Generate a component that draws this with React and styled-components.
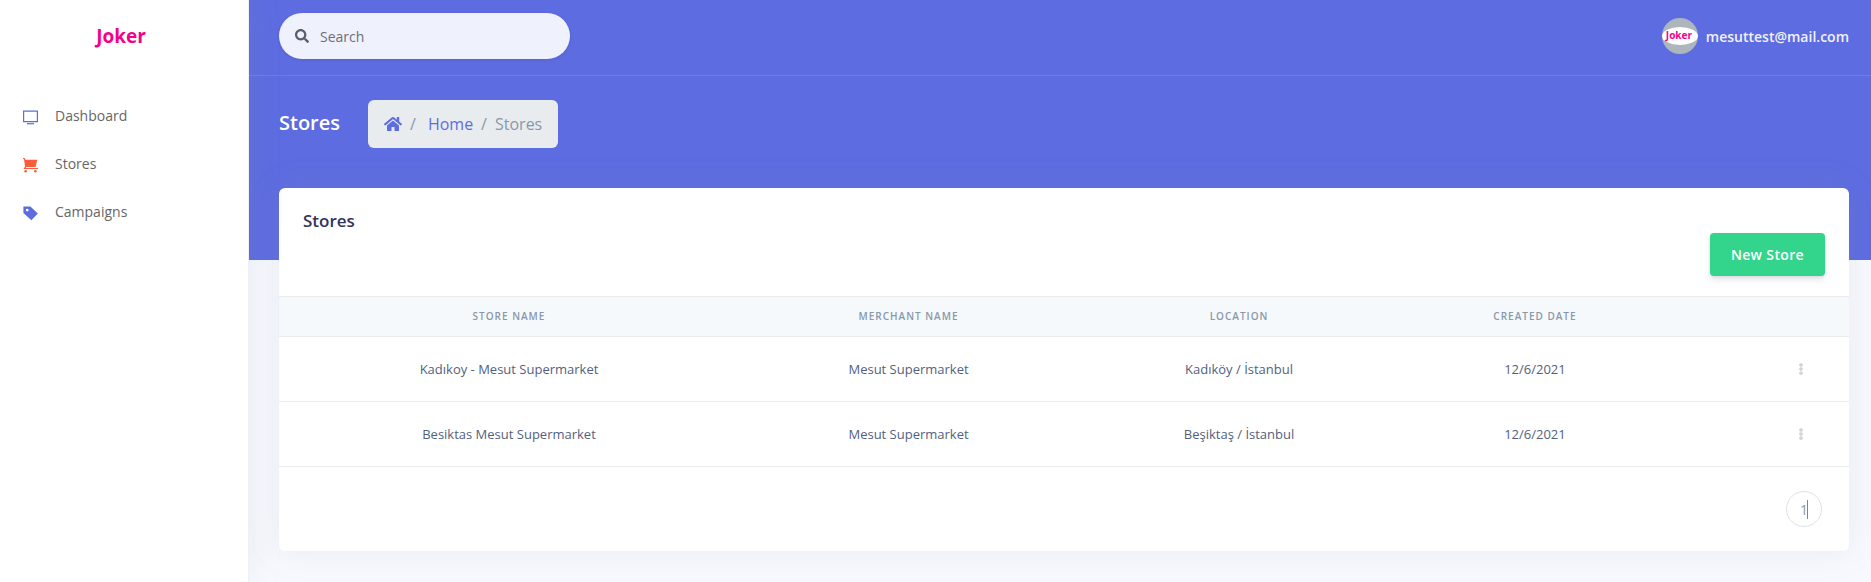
import React from "react";
import styled, { createGlobalStyle } from "styled-components";
import { FaSearch, FaHome, FaEllipsisV } from "react-icons/fa";

const GlobalStyle = createGlobalStyle`
  *, *::before, *::after { box-sizing: border-box; }
  body {
    margin: 0;
    background: #f8f9fe;
    color: #525f7f;
    font-family: "Open Sans", "Noto Sans", sans-serif;
    font-size: 16px;
    line-height: 24px;
  }
  h1, h2, ul, ol { margin: 0; padding: 0; }
  ul, ol { list-style: none; }
  a { text-decoration: none; }
  button, input { font-family: inherit; }
`;

const Layout = styled.div`
  display: flex;
  min-height: 100vh;
`;

const Sidebar = styled.aside`
  flex: 0 0 249px;
  position: relative;
  z-index: 1;
  background: #fff;
  border-right: 1px solid #f0f0f4;
  box-shadow: 0 0 32px 0 rgba(136, 152, 170, 0.15);
`;

const Brand = styled.a`
  display: flex;
  align-items: center;
  justify-content: center;
  height: 72px;
  padding-right: 6px;
  color: #f5008b;
  font-size: 19px;
  font-weight: 700;
`;

const NavList = styled.ul`
  display: flex;
  flex-direction: column;
  gap: 4px;
  padding: 22px 8px !important;
`;

const NavLink = styled.a`
  display: flex;
  align-items: center;
  height: 44px;
  padding: 0 15px;
  gap: 17px;
  color: #666;
  font-size: 14px;
`;

const NavIcon = styled.svg`
  width: 15px;
  height: 15px;
  margin-top: 2px;
  fill: ${(p) => p.$color};
`;

const Main = styled.div`
  flex: 1;
  min-width: 0;
`;

const Hero = styled.div`
  background: #5d6ce0;
  padding-bottom: 112px;
`;

const TopBar = styled.header`
  display: flex;
  align-items: center;
  justify-content: space-between;
  height: 76px;
  padding: 0 22px 4px 30px;
  border-bottom: 1px solid rgba(255, 255, 255, 0.1);
`;

const SearchBox = styled.label`
  display: flex;
  align-items: center;
  gap: 11px;
  width: 291px;
  height: 46px;
  padding: 0 16px;
  border-radius: 32px;
  background: #eff1fd;
  color: #5b5e66;
  box-shadow: 0 1px 3px rgba(50, 50, 93, 0.15);
  svg { width: 14px; height: 14px; }
`;

const SearchInput = styled.input`
  flex: 1;
  min-width: 0;
  padding: 2px 0 0;
  border: 0;
  outline: 0;
  background: none;
  color: #5b5e66;
  font-size: 14px;
  &::placeholder { color: #6c6f78; opacity: 1; }
`;

const Account = styled.a`
  display: flex;
  align-items: center;
  gap: 8px;
  color: #f1f2fd;
  font-size: 14px;
  font-weight: 600;
`;

const AccountName = styled.span`
  padding-top: 2px;
`;

const Avatar = styled.span`
  display: flex;
  align-items: center;
  width: 36px;
  height: 36px;
  border-radius: 50%;
  background: #adb5bd;
  overflow: hidden;
`;

const AvatarMark = styled.span`
  width: 36px;
  height: 18px;
  padding-left: 4px;
  border-radius: 50%;
  background: #fff;
  color: #f5008b;
  font-size: 10px;
  font-weight: 700;
  line-height: 16px;
`;

const TitleRow = styled.div`
  display: flex;
  align-items: center;
  gap: 28px;
  padding: 24px 30px 0;
`;

const PageTitle = styled.h1`
  padding-bottom: 2px !important;
  color: #fff;
  font-size: 20px;
  font-weight: 600;
`;

const Crumbs = styled.ol`
  display: flex;
  align-items: center;
  gap: 8px;
  height: 48px;
  padding: 0 16px !important;
  border-radius: 6px;
  background: #e9ecef;
  color: #8898aa;
`;

const Crumb = styled.li`
  display: flex;
  align-items: center;
  gap: ${(p) => p.$gap || 8}px;
  &:not(:first-child)::before { content: "/"; }
  a { display: flex; color: #5d6ce0; }
  svg { width: 18px; height: 16px; }
`;

const Card = styled.section`
  margin: -72px 22px 30px 30px;
  border-radius: 6px;
  background: #fff;
  box-shadow: 0 0 32px 0 rgba(136, 152, 170, 0.15);
  position: relative;
`;

const CardHeader = styled.div`
  display: flex;
  flex-direction: column;
  padding: 20px 24px;
`;

const CardTitle = styled.h2`
  color: #32325d;
  font-size: 17px;
  font-weight: 600;
  line-height: 25px;
`;

const NewButton = styled.button`
  align-self: flex-end;
  height: 43px;
  padding: 0 21px;
  border: 0;
  border-radius: 4px;
  background: #33d48c;
  color: #fff;
  font-size: 14px;
  font-weight: 600;
  letter-spacing: 0.025em;
  box-shadow: 0 4px 6px rgba(50, 50, 93, 0.11), 0 1px 3px rgba(0, 0, 0, 0.08);
`;

const Table = styled.table`
  width: 100%;
  border-spacing: 0;
  table-layout: fixed;
`;

const Col = styled.col`
  width: ${(p) => p.$share}%;
`;

const Th = styled.th`
  height: 40px;
  padding: 0 24px 2px;
  border-top: 1px solid #e9ecef;
  background: #f6f9fc;
  color: #8898aa;
  font-size: 10px;
  font-weight: 600;
  letter-spacing: 1px;
  text-transform: uppercase;
`;

const Td = styled.td`
  height: 65px;
  padding: 0 24px;
  border-top: 1px solid #e9ecef;
  font-size: 13px;
  text-align: ${(p) => p.$align || "center"};
`;

const RowMenu = styled.button`
  display: inline-flex;
  align-items: center;
  justify-content: center;
  width: 32px;
  height: 32px;
  margin-right: 8px;
  padding: 0;
  border: 0;
  background: none;
  color: #ced4da;
  vertical-align: middle;
  svg { width: 12px; height: 12px; stroke: currentColor; stroke-width: 16px; }
`;

const CardFooter = styled.nav`
  display: flex;
  justify-content: flex-end;
  padding: 24px 27px;
  border-top: 1px solid #e9ecef;
`;

const PageButton = styled.button`
  display: flex;
  align-items: center;
  justify-content: center;
  width: 36px;
  height: 36px;
  padding: 0;
  border: 1px solid #dee2e6;
  border-radius: 50%;
  background: #fff;
  color: #8898aa;
  font-size: 14px;
`;

const Caret = styled.span`
  width: 1px;
  height: 19px;
  margin-left: -1px;
  background: #7a839c;
`;

const stores = [
  ["Kadıkoy - Mesut Supermarket", "Mesut Supermarket", "Kadıköy / İstanbul", "12/6/2021"],
  ["Besiktas Mesut Supermarket", "Mesut Supermarket", "Beşiktaş / İstanbul", "12/6/2021"],
];

export default function App() {
  return (
    <>
      <GlobalStyle />
      <Layout>
        <Sidebar>
          <Brand href="#">Joker</Brand>
          <nav aria-label="Main">
            <NavList>
              <li>
                <NavLink href="#">
                  <NavIcon $color="#5d6ce0" viewBox="0 0 15 15" aria-hidden="true">
                    <path fillRule="evenodd" d="M0 .6h15v11.6H0zM1.2 1.8V11h12.6V1.8z" />
                    <path d="M4 13.1h7v1.2H4z" />
                  </NavIcon>
                  Dashboard
                </NavLink>
              </li>
              <li>
                <NavLink href="#">
                  <NavIcon $color="#fb5c3c" viewBox="0 0 15 15" aria-hidden="true">
                    <path d="M0 0h1.6l.9 1.8H14.3L12.6 9H3.2L2.6 9.9H15v1H.4l1.5-2.2L2 8 1 1.3 0 1z" />
                    <circle cx="2.6" cy="13.2" r="1.3" />
                    <circle cx="12.4" cy="13.2" r="1.3" />
                  </NavIcon>
                  Stores
                </NavLink>
              </li>
              <li>
                <NavLink href="#">
                  <NavIcon $color="#5d6ce0" viewBox="0 0 15 15" aria-hidden="true">
                    <path fillRule="evenodd" d="M.4.4h7l7.4 7.2-6.4 6.6L.4 7zM4.2 2.7a1.4 1.4 0 1 0 0 2.8 1.4 1.4 0 0 0 0-2.8z" />
                  </NavIcon>
                  Campaigns
                </NavLink>
              </li>
            </NavList>
          </nav>
        </Sidebar>
        <Main>
          <Hero>
            <TopBar>
              <SearchBox>
                <FaSearch aria-hidden="true" />
                <SearchInput type="text" placeholder="Search" aria-label="Search" />
              </SearchBox>
              <Account href="#">
                <Avatar aria-hidden="true">
                  <AvatarMark>Joker</AvatarMark>
                </Avatar>
                <AccountName>mesuttest@mail.com</AccountName>
              </Account>
            </TopBar>
            <TitleRow>
              <PageTitle>Stores</PageTitle>
              <nav aria-label="Breadcrumb">
                <Crumbs>
                  <Crumb>
                    <a href="#" aria-label="Home page"><FaHome /></a>
                  </Crumb>
                  <Crumb $gap={12}>
                    <a href="#">Home</a>
                  </Crumb>
                  <Crumb aria-current="page">Stores</Crumb>
                </Crumbs>
              </nav>
            </TitleRow>
          </Hero>
          <Card>
            <CardHeader>
              <CardTitle>Stores</CardTitle>
              <NewButton type="button">New Store</NewButton>
            </CardHeader>
            <Table>
              <colgroup>
                <Col $share={29.3} />
                <Col $share={21.6} />
                <Col $share={20.5} />
                <Col $share={17.2} />
                <Col $share={11.4} />
              </colgroup>
              <thead>
                <tr>
                  <Th scope="col">Store Name</Th>
                  <Th scope="col">Merchant Name</Th>
                  <Th scope="col">Location</Th>
                  <Th scope="col">Created Date</Th>
                  <Th scope="col" aria-label="Actions" />
                </tr>
              </thead>
              <tbody>
                {stores.map((row) => (
                  <tr key={row[0]}>
                    {row.map((cell, i) => (
                      <Td key={i}>{cell}</Td>
                    ))}
                    <Td $align="right">
                      <RowMenu type="button" aria-label={`Actions for ${row[0]}`}>
                        <FaEllipsisV />
                      </RowMenu>
                    </Td>
                  </tr>
                ))}
              </tbody>
            </Table>
            <CardFooter aria-label="Pagination">
              <PageButton type="button">
                1<Caret />
              </PageButton>
            </CardFooter>
          </Card>
        </Main>
      </Layout>
    </>
  );
}
